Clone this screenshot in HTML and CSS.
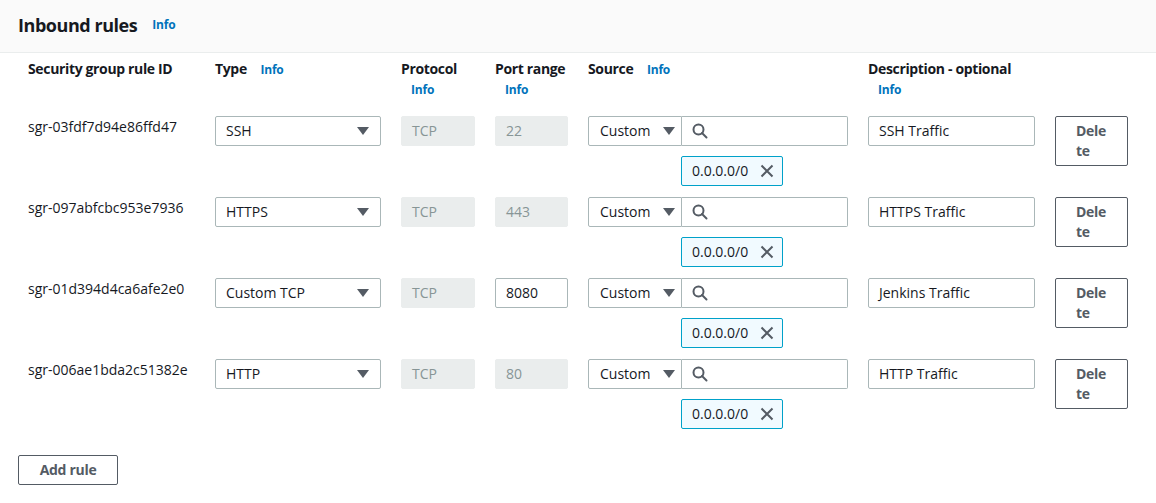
FILE: index.html
```html
<!DOCTYPE html>
<html>
<head>
<meta charset="utf-8">
<link rel="stylesheet" href="styles.css">
</head>
<body>
<div class="panel">
  <div class="panel-header">
    <h2 class="title">Inbound rules</h2>
    <a class="info title-info">Info</a>
  </div>
  <div class="rules">
    <div class="grid">
      <div class="th"><span class="label">Security group rule ID</span></div>
      <div class="th"><span class="label">Type</span> <span class="info">Info</span></div>
      <div class="th"><span class="label">Protocol</span> <span class="info">Info</span></div>
      <div class="th"><span class="label">Port range</span> <span class="info">Info</span></div>
      <div class="th"><span class="label">Source</span> <span class="info">Info</span></div>
      <div class="th"><span class="label">Description - optional</span> <span class="info">Info</span></div>
      <div class="th"></div>

      <div class="rid">sgr-03fdf7d94e86ffd47</div>
      <div><div class="select">SSH<span class="caret"></span></div></div>
      <div><div class="field disabled">TCP</div></div>
      <div><div class="field disabled">22</div></div>
      <div class="source">
        <div class="src-row"><div class="src-select">Custom<span class="caret"></span></div><div class="search"><svg width="16" height="16" viewBox="0 0 16 16"><circle cx="6.5" cy="6.5" r="5" fill="none" stroke="#545b64" stroke-width="2"/><path d="M10 10l4.5 4.5" stroke="#545b64" stroke-width="2" stroke-linecap="round"/></svg></div></div>
        <div class="token">0.0.0.0/0<svg width="14" height="14" viewBox="0 0 14 14"><path d="M1.5 1.5l11 11M12.5 1.5l-11 11" stroke="#545b64" stroke-width="2"/></svg></div>
      </div>
      <div><div class="field">SSH Traffic</div></div>
      <div><button class="btn del">Delete</button></div>

      <div class="rid">sgr-097abfcbc953e7936</div>
      <div><div class="select">HTTPS<span class="caret"></span></div></div>
      <div><div class="field disabled">TCP</div></div>
      <div><div class="field disabled">443</div></div>
      <div class="source">
        <div class="src-row"><div class="src-select">Custom<span class="caret"></span></div><div class="search"><svg width="16" height="16" viewBox="0 0 16 16"><circle cx="6.5" cy="6.5" r="5" fill="none" stroke="#545b64" stroke-width="2"/><path d="M10 10l4.5 4.5" stroke="#545b64" stroke-width="2" stroke-linecap="round"/></svg></div></div>
        <div class="token">0.0.0.0/0<svg width="14" height="14" viewBox="0 0 14 14"><path d="M1.5 1.5l11 11M12.5 1.5l-11 11" stroke="#545b64" stroke-width="2"/></svg></div>
      </div>
      <div><div class="field">HTTPS Traffic</div></div>
      <div><button class="btn del">Delete</button></div>

      <div class="rid">sgr-01d394d4ca6afe2e0</div>
      <div><div class="select">Custom TCP<span class="caret"></span></div></div>
      <div><div class="field disabled">TCP</div></div>
      <div><div class="field">8080</div></div>
      <div class="source">
        <div class="src-row"><div class="src-select">Custom<span class="caret"></span></div><div class="search"><svg width="16" height="16" viewBox="0 0 16 16"><circle cx="6.5" cy="6.5" r="5" fill="none" stroke="#545b64" stroke-width="2"/><path d="M10 10l4.5 4.5" stroke="#545b64" stroke-width="2" stroke-linecap="round"/></svg></div></div>
        <div class="token">0.0.0.0/0<svg width="14" height="14" viewBox="0 0 14 14"><path d="M1.5 1.5l11 11M12.5 1.5l-11 11" stroke="#545b64" stroke-width="2"/></svg></div>
      </div>
      <div><div class="field">Jenkins Traffic</div></div>
      <div><button class="btn del">Delete</button></div>

      <div class="rid">sgr-006ae1bda2c51382e</div>
      <div><div class="select">HTTP<span class="caret"></span></div></div>
      <div><div class="field disabled">TCP</div></div>
      <div><div class="field disabled">80</div></div>
      <div class="source">
        <div class="src-row"><div class="src-select">Custom<span class="caret"></span></div><div class="search"><svg width="16" height="16" viewBox="0 0 16 16"><circle cx="6.5" cy="6.5" r="5" fill="none" stroke="#545b64" stroke-width="2"/><path d="M10 10l4.5 4.5" stroke="#545b64" stroke-width="2" stroke-linecap="round"/></svg></div></div>
        <div class="token">0.0.0.0/0<svg width="14" height="14" viewBox="0 0 14 14"><path d="M1.5 1.5l11 11M12.5 1.5l-11 11" stroke="#545b64" stroke-width="2"/></svg></div>
      </div>
      <div><div class="field">HTTP Traffic</div></div>
      <div><button class="btn del">Delete</button></div>
    </div>
  </div>
  <div class="footer">
    <button class="btn add">Add rule</button>
  </div>
</div>
</body>
</html>
```

FILE: styles.css
```css
* { box-sizing: border-box; }
html, body { margin: 0; padding: 0; background: #ffffff; }
body {
  font-family: "Open Sans", "Noto Sans", sans-serif;
  font-size: 14px;
  color: #16191f;
  line-height: 20px;
}
.panel-header {
  background: #fafafa;
  border-bottom: 1px solid #eaeded;
  height: 53px;
  display: flex;
  align-items: center;
  padding: 0 18px 3px 18px;
}
.title {
  margin: 0;
  font-size: 18px;
  font-weight: 700;
  line-height: 24px;
  letter-spacing: -0.45px;
}
.info {
  color: #0073bb;
  font-size: 12px;
  font-weight: 700;
  display: inline-block;
  margin-left: 10px;
  letter-spacing: -0.2px;
}
.title-info { margin-left: 15px; }
.rules { padding: 6px 0 0 28px; }
.grid {
  display: grid;
  grid-template-columns: 167px 166px 74px 73px 260px 167px 73px;
  column-gap: 20px;
  row-gap: 11px;
}
.th {
  font-weight: 700;
  padding-bottom: 5px;
}
.label {
  white-space: nowrap;
  letter-spacing: -0.35px;
}
.rid { padding-top: 1px; }
.field, .select, .src-select, .search {
  height: 30px;
  border: 1px solid #aab7b8;
  border-radius: 2px;
  padding: 0 10px;
  display: flex;
  align-items: center;
  white-space: nowrap;
}
.field.disabled {
  background: #eaeded;
  border-color: #eaeded;
  color: #879596;
}
.select { justify-content: space-between; padding-right: 11px; }
.caret {
  width: 0; height: 0;
  border-left: 6px solid transparent;
  border-right: 6px solid transparent;
  border-top: 8px solid #545b64;
}
.source { display: flex; flex-direction: column; align-items: flex-start; gap: 10px; }
.src-row { display: flex; width: 100%; }
.src-select {
  width: 94px;
  justify-content: space-between;
  padding: 0 6px 0 11px;
  border-radius: 2px 0 0 2px;
}
.search {
  flex: 1;
  border-left: none;
  border-radius: 0 2px 2px 0;
  padding-left: 10px;
}
.token {
  margin-left: 93px;
  width: 102px;
  height: 30px;
  border: 1px solid #00a1c9;
  background: #f1faff;
  border-radius: 2px;
  display: flex;
  align-items: center;
  justify-content: space-between;
  padding: 0 8px 0 10px;
}
.btn {
  font-family: inherit;
  font-size: 14px;
  font-weight: 700;
  line-height: 20px;
  color: #545b64;
  background: #ffffff;
  border: 1px solid #545b64;
  border-radius: 2px;
  letter-spacing: -0.3px;
}
.del {
  width: 73px;
  height: 50px;
  padding: 4px 18px 4px 20px;
  text-align: left;
  word-break: break-all;
}
.footer { padding: 26px 18px 0 18px; }
.add {
  width: 100px;
  height: 30px;
  padding: 0;
  white-space: nowrap;
  text-align: center;
}
```
